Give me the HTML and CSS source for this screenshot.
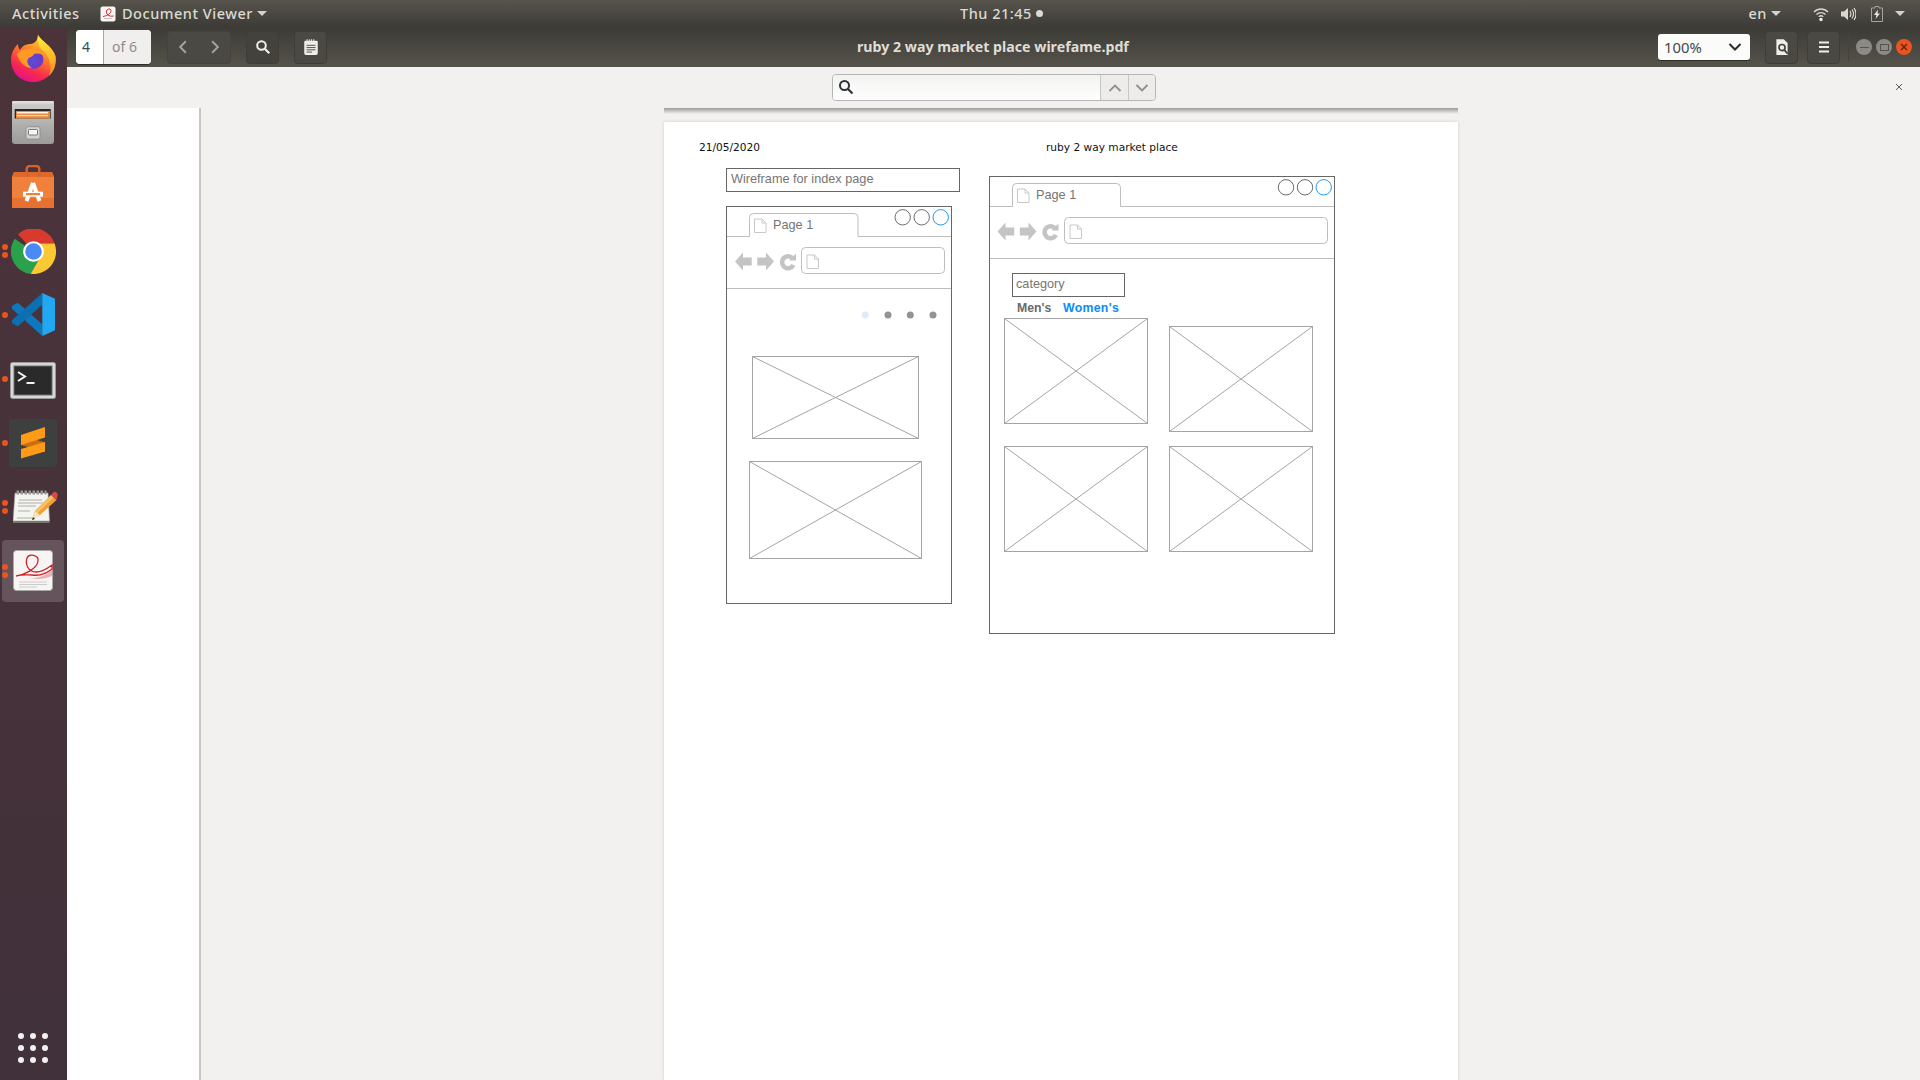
FILE: index.html
```html
<!DOCTYPE html>
<html lang="en">
<head>
<meta charset="utf-8">
<title>Document Viewer</title>
<link rel="stylesheet" href="styles.css">
</head>
<body>
<header class="topbar">
  <div class="tb-left">
    <span class="tb-text tb-activities">Activities</span>
    <span class="tb-app">
      <svg class="tb-appicon" viewBox="0 0 16 16"><rect x="0.500" y="0.500" width="15" height="15" rx="2" fill="#f6f5f3"/><path d="M3 10.500C6 10 11 8 11 4.500C11 2.500 7 2.500 6.500 5C6 8 8.500 11 13.500 10" fill="none" stroke="#d0242a" stroke-width="1"/><path d="M4 12.500h8" stroke="#b5b5b5" stroke-width="0.800"/></svg>
      <span class="tb-text">Document Viewer</span>
      <i class="caret"></i>
    </span>
  </div>
  <div class="tb-clock"><span class="tb-text">Thu 21:45</span><i class="clock-dot"></i></div>
  <div class="tb-right">
    <span class="tb-text tb-en">en</span><i class="caret"></i>
    <svg class="tray tray-wifi" viewBox="0 0 16 16"><path d="M1 6C5 2 11 2 15 6M3.500 8.500C6 6 10 6 12.500 8.500M5.800 10.800C7 9.700 9 9.700 10.200 10.800" fill="none" stroke="#d8d6d0" stroke-width="1.400"/><circle cx="8" cy="13.500" r="1.700" fill="#f0efea"/></svg>
    <svg class="tray tray-vol" viewBox="0 0 16 16"><path d="M1 5.500h3L8 2v12L4 10.500H1z" fill="#d8d6d0"/><path d="M10 5c1 1.800 1 4.200 0 6M12 3.500c1.800 2.600 1.800 6.400 0 9M14 2c2.400 3.600 2.400 8.400 0 12" fill="none" stroke="#d8d6d0" stroke-width="1.200"/></svg>
    <svg class="tray tray-bat" viewBox="0 0 12 16"><path d="M4 0.500h4v1.500h3.500v13.500h-11V2H4z" fill="none" stroke="#a5a39d" stroke-width="1"/><path d="M7 3.500L3 9h2.500L4.500 13 9 7.500H6.500z" fill="#e8e6e0"/></svg>
    <i class="caret"></i>
  </div>
</header>
<div class="desktop">
  <nav class="dock">
    <div class="dock-item">
      <svg class="ic ic-firefox" viewBox="0 0 45 47">
        <defs>
          <linearGradient id="ff1" x1="0.8" y1="0.1" x2="0.35" y2="1"><stop offset="0" stop-color="#ffd52b"/><stop offset="0.4" stop-color="#ff7a2a"/><stop offset="0.75" stop-color="#f8284f"/><stop offset="1" stop-color="#e4128c"/></linearGradient>
          <linearGradient id="ff3" x1="0.3" y1="0" x2="0.6" y2="1"><stop offset="0" stop-color="#ffe93a"/><stop offset="0.7" stop-color="#ffb22a"/><stop offset="1" stop-color="#ff8a2a"/></linearGradient>
          <radialGradient id="ff2" cx="0.5" cy="0.6" r="0.6"><stop offset="0" stop-color="#5f4bd6"/><stop offset="0.75" stop-color="#6a3cc4"/><stop offset="1" stop-color="#a22aa8"/></radialGradient>
        </defs>
        <path d="M27 0C30 6 40 10 44 20C47 34 36 47 22.500 47C9 47 0 37 0 25C0 18 3 13 7 9C7 12 8 14 9 15C11 11 15 9 20 9C25 8 27 4 27 0z" fill="url(#ff1)"/>
        <path d="M27 0C31 7 41 11 44.500 21C46 32 41 38 38 41C42 30 38 20 30 14C27 9 26 4 27 0z" fill="url(#ff3)"/>
        <circle cx="22.500" cy="24" r="10" fill="url(#ff2)"/>
        <path d="M6 19C10 14 17 13 24 14C30 15 34 20 34 22C30 18 26 18 23 19C22 22 18 22 17 24C15 28 18 31 21 33C14 33 8 27 6 19z" fill="#ff9a24"/>
      </svg>
    </div>
    <div class="dock-item">
      <svg class="ic ic-files" viewBox="0 0 42 43">
        <defs><linearGradient id="fc" x1="0" y1="0" x2="0" y2="1"><stop offset="0" stop-color="#cfcfcd"/><stop offset="0.55" stop-color="#b0b0ae"/><stop offset="1" stop-color="#9b9b99"/></linearGradient></defs>
        <rect width="42" height="43" rx="3" fill="url(#fc)"/>
        <rect width="42" height="2.500" rx="1.200" fill="#dededc"/>
        <rect x="2.700" y="8" width="36" height="9.500" fill="#2a2623"/>
        <rect x="4" y="10" width="34" height="7.500" fill="#e88a3a"/>
        <rect x="5" y="11" width="31" height="1.500" fill="#fbf1e4"/>
        <rect x="5" y="14" width="31" height="1.200" fill="#f8d9b8"/>
        <rect x="14" y="25.700" width="14" height="12.300" rx="2" fill="#d2d2d0" stroke="#8a8a88" stroke-width="0.800"/>
        <rect x="16.500" y="28.500" width="9" height="5.500" rx="1" fill="#f6f6f4" stroke="#5d5d5b" stroke-width="0.800"/>
      </svg>
    </div>
    <div class="dock-item">
      <svg class="ic ic-bag" viewBox="0 0 42 43">
        <path d="M2 7h38l2 5v31H0V12z" fill="#f0813c"/>
        <path d="M0 33h42v10H0z" fill="#e87132"/>
        <path d="M0 12l2-5h38l2 5z" fill="#dd6a2a"/>
        <path d="M14.700 11V4a3 3 0 0 1 3-3h6.600a3 3 0 0 1 3 3v7" fill="none" stroke="#d6622a" stroke-width="2.400"/>
        <path d="M21 18L14.500 36M21 18L27.500 36" stroke="#fff" stroke-width="4"/>
        <rect x="11" y="26.700" width="20" height="5" fill="#fff"/>
        <rect x="14" y="28" width="14" height="2.200" fill="#f0813c"/>
      </svg>
    </div>
    <div class="dock-item">
      <svg class="ic ic-chrome" viewBox="0 0 48 48">
        <path d="M24 24L7.500 5.500A24 24 0 0 1 46.500 15.500H24z" fill="#d93a2e"/>
        <path d="M24 24L4 10.500A24 24 0 0 0 21 47.800L33 27z" fill="#2aa24c"/>
        <path d="M24 15.500H46.500A24 24 0 0 1 21 47.800L33 27z" fill="#fcc934"/>
        <circle cx="24" cy="24" r="11" fill="#fff"/>
        <circle cx="24" cy="24" r="8.800" fill="#4a8af4"/>
      </svg>
    </div>
    <div class="dock-item">
      <svg class="ic ic-code" viewBox="0 0 44 44">
        <path d="M6 10L31 32v12L0 16v-3z" fill="#0f77bd"/>
        <path d="M6 34L31 12V0L0 28v3z" fill="#0b6fb2"/>
        <path d="M31 0l13 6v32l-13 6z" fill="#22a7f2"/>
      </svg>
    </div>
    <div class="dock-item">
      <svg class="ic ic-term" viewBox="0 0 46 37">
        <rect x="0.500" y="0.500" width="45" height="36" rx="2" fill="#d8d8d6" stroke="#9a9a98"/>
        <rect x="4" y="4" width="38" height="29" fill="#2a2a2a" stroke="#6d6d6b"/>
        <path d="M8 10l7 4.500-7 4.500" fill="none" stroke="#f2f2f2" stroke-width="2"/>
        <rect x="16.500" y="20" width="8" height="2" fill="#f2f2f2"/>
      </svg>
    </div>
    <div class="dock-item">
      <svg class="ic ic-subl" viewBox="0 0 48 48">
        <rect width="48" height="48" rx="3" fill="#3e3f3f"/>
        <path d="M12 16L36 23.500V33L12 26z" fill="#c96f0e"/>
        <path d="M36 8V18.500L12 26V16z" fill="#ff9b17"/>
        <path d="M36 23V32.500L12 39.500V30z" fill="#ff9b17"/>
      </svg>
    </div>
    <div class="dock-item">
      <svg class="ic ic-gedit" viewBox="0 0 45 34">
        <path d="M2 3h33l1.500 28H0z" fill="#f4f4f0" stroke="#a2a29e" stroke-width="0.600"/>
        <path d="M0 31h36.500v2H0z" fill="#77776f"/>
        <path d="M3.500 2.500h30" stroke="#98988f" stroke-width="4" stroke-dasharray="2.500 1.500"/>
        <path d="M6 10h23M5 13h25M5 16h18M5 21h12M4 28h15" stroke="#b0b0aa" stroke-width="1"/>
        <path d="M19 29L22 21L38 5L43.500 10L27 25z" fill="#f2a034"/>
        <path d="M22 21L38 5L40.500 7.500L24.500 23z" fill="#f8c068"/>
        <path d="M19 29L22 21L27 25z" fill="#f7e2c0"/>
        <path d="M38 5L40.500 2.300C42.500 0.800 45.500 3.500 44.500 6L43.500 10z" fill="#d9474a"/>
        <path d="M19 30l1-3 2 2z" fill="#222"/>
      </svg>
    </div>
    <div class="dock-item is-active">
      <span class="tile"></span>
      <svg class="ic ic-evince" viewBox="0 0 40 41">
        <rect x="0.500" y="0.500" width="39" height="40" rx="3" fill="#f6f5f3" stroke="#aaa8a6"/>
        <path d="M3 26c8-1 21-7 22-15 1-6-9-8-11-3-2 6 1 14 9 14 6 0 12-4 16-7v4c-6 5-13 7-20 6-5 0-9-1-16 1z" fill="none" stroke="#d01f28" stroke-width="1.300"/>
        <path d="M16 28c10 1 17-3 23-8v6c-7 3-15 4-23 2z" fill="#ec8f90" opacity="0.700"/>
        <path d="M6 32h28M6 34.500h28M6 37h18" stroke="#c0c0c0" stroke-width="0.800"/>
      </svg>
    </div>
    <div class="dock-apps">
      <i></i><i></i><i></i><i></i><i></i><i></i><i></i><i></i><i></i>
    </div>
  </nav>
  <main class="window">
    <div class="headerbar">
      <div class="hb-group">
        <div class="page-entry"><span class="pe-num">4</span><span class="pe-of">of 6</span></div>
        <div class="hb-btn hb-nav">
          <svg class="hb-ic" viewBox="0 0 14 14"><path d="M9.500 2L4.500 7l5 5" fill="none" stroke="#a5a39d" stroke-width="1.700"/></svg>
          <svg class="hb-ic" viewBox="0 0 14 14"><path d="M4.500 2l5 5-5 5" fill="none" stroke="#a5a39d" stroke-width="1.700"/></svg>
        </div>
        <div class="hb-btn hb-square hb-dark">
          <svg class="hb-ic" viewBox="0 0 16 16"><circle cx="6.500" cy="6.500" r="4.300" fill="none" stroke="#f0efea" stroke-width="2"/><path d="M9.800 9.800l4.500 4.500" stroke="#f0efea" stroke-width="2.200"/></svg>
        </div>
        <div class="hb-btn hb-square">
          <svg class="hb-ic hb-ic-lg" viewBox="0 0 16 16"><path d="M3 2.500h10a1 1 0 0 1 1 1v10a1.500 1.500 0 0 1-1.500 1.500h-9A1.500 1.500 0 0 1 2 13.500v-10a1 1 0 0 1 1-1z" fill="#efeee9"/><path d="M4.500 1v3M6.500 1v3M8.500 1v3M10.500 1v3" stroke="#efeee9" stroke-width="0.900"/><path d="M4 6.500h8M4 8.500h8M4 10.500h8M4 12.500h5" stroke="#45433e" stroke-width="0.800"/></svg>
        </div>
      </div>
      <div class="hb-title">ruby 2 way market place wirefame.pdf</div>
      <div class="hb-group hb-end">
        <div class="zoom-box"><span>100%</span><svg class="zoom-chev" viewBox="0 0 14 8"><path d="M1.500 1L7 6.500 12.500 1" fill="none" stroke="#2e2d2a" stroke-width="2"/></svg></div>
        <div class="hb-btn hb-square hb-doc">
          <svg class="hb-ic hb-ic-lg" viewBox="0 0 16 16"><path d="M3 1h6.500L13 4.500V15H3z" fill="#efeee9"/><circle cx="8" cy="8.500" r="2.700" fill="none" stroke="#45433e" stroke-width="1.500"/><path d="M10 10.500l3 3.500" stroke="#45433e" stroke-width="1.700"/></svg>
        </div>
        <div class="hb-btn hb-square">
          <svg class="hb-ic" viewBox="0 0 16 16"><path d="M3 3.500h10M3 8h10M3 12.500h10" stroke="#efeee9" stroke-width="2"/></svg>
        </div>
        <i class="hb-sep"></i>
        <div class="wm">
          <span class="wm-btn"><i class="wm-min"></i></span>
          <span class="wm-btn"><i class="wm-max"></i></span>
          <span class="wm-btn wm-close"><svg viewBox="0 0 10 10" class="wm-x"><path d="M2 2l6 6M8 2l-6 6" stroke="#5a2110" stroke-width="1.300"/></svg></span>
        </div>
      </div>
    </div>
    <div class="findbar">
      <div class="find-box">
        <div class="find-input">
          <svg class="find-ic" viewBox="0 0 16 16"><circle cx="6.500" cy="6.500" r="4.500" fill="none" stroke="#2e3436" stroke-width="2"/><path d="M10 10l4.500 4.500" stroke="#2e3436" stroke-width="2.200"/></svg>
        </div>
        <div class="find-btn"><svg viewBox="0 0 14 8" class="find-chev"><path d="M1.500 7L7 1.500 12.500 7" fill="none" stroke="#8f8f8b" stroke-width="1.800"/></svg></div>
        <div class="find-btn"><svg viewBox="0 0 14 8" class="find-chev"><path d="M1.500 1L7 6.500 12.500 1" fill="none" stroke="#8f8f8b" stroke-width="1.800"/></svg></div>
      </div>
      <svg class="find-close" viewBox="0 0 8 8"><path d="M1 1l6 6M7 1L1 7" stroke="#5a5a58" stroke-width="1"/></svg>
    </div>
    <div class="viewer">
      <aside class="sidepane"></aside>
      <div class="scroller">
        <i class="find-shadow"></i>
        <section class="page">
          <svg class="sheet" viewBox="664 122 794 958">
            <defs>
              <g id="doc"><path d="M0.500 0.500H8L12 4.500V14H0.500z" fill="#fff" stroke="#c8c8c8"/><path d="M8 0.500V4.500H12" fill="none" stroke="#c8c8c8"/></g>
              <g id="nav">
                <path d="M0 9l8-9v5h8.700v8H8v5z" fill="#c4c4c4"/>
                <path d="M39 9l-8-9v5h-8.700v8h8.700v5z" fill="#c4c4c4"/>
                <path d="M58.500 7A6 6 0 1 0 58.500 12.500" fill="none" stroke="#c4c4c4" stroke-width="4.500"/>
                <path d="M54 8H61V1z" fill="#c4c4c4"/>
              </g>
            </defs>
            <text class="t-date" x="699" y="151">21/05/2020</text>
            <text class="t-date" x="1046" y="151">ruby 2 way market place</text>

            <rect class="box" x="726.500" y="168.500" width="233" height="23"/>
            <text class="t-label" x="731" y="182.500">Wireframe for index page</text>

            <rect class="box" x="726.500" y="206.500" width="225" height="397"/>
            <path class="thin" d="M727 236.500H749.500V217.500a4 4 0 0 1 4-4H854a4 4 0 0 1 4 4V236.500H951"/>
            <use href="#doc" x="754" y="218.500"/>
            <text class="t-label" x="773" y="229">Page 1</text>
            <circle class="c-grey" cx="902.700" cy="217.300" r="7.700"/>
            <circle class="c-grey" cx="921.700" cy="217.300" r="7.700"/>
            <circle class="c-blue" cx="940.700" cy="217.300" r="7.700"/>
            <use href="#nav" x="735" y="252.500"/>
            <rect class="thin" x="801.500" y="247.500" width="143" height="26" rx="4"/>
            <use href="#doc" x="806.500" y="254.500"/>
            <path class="thin" d="M727 288.500H951"/>
            <circle cx="865.300" cy="315" r="3.500" fill="#dcecfb"/>
            <circle cx="888" cy="315" r="3.500" fill="#939393"/>
            <circle cx="910.300" cy="315" r="3.500" fill="#939393"/>
            <circle cx="933" cy="315" r="3.500" fill="#939393"/>

            <g class="ph"><rect x="752.500" y="356.500" width="166" height="82"/><path d="M752.500 356.500L918.500 438.500M918.500 356.500L752.500 438.500"/></g>
            <g class="ph"><rect x="749.500" y="461.500" width="172" height="97"/><path d="M749.500 461.500L921.500 558.500M921.500 461.500L749.500 558.500"/></g>

            <rect class="box" x="989.500" y="176.500" width="345" height="457"/>
            <path class="thin" d="M990 206.500H1012.500V187.500a4 4 0 0 1 4-4H1116.500a4 4 0 0 1 4 4V206.500H1334"/>
            <use href="#doc" x="1017" y="188.500"/>
            <text class="t-label" x="1036" y="199">Page 1</text>
            <circle class="c-grey" cx="1286" cy="187.300" r="7.700"/>
            <circle class="c-grey" cx="1305" cy="187.300" r="7.700"/>
            <circle class="c-blue" cx="1323.700" cy="187.300" r="7.700"/>
            <use href="#nav" x="997.500" y="222.500"/>
            <rect class="thin" x="1064.500" y="217.500" width="263" height="26" rx="4"/>
            <use href="#doc" x="1069.500" y="224.500"/>
            <path class="thin" d="M990 258.500H1334"/>

            <rect class="box" x="1012.500" y="273.500" width="112" height="23"/>
            <text class="t-label" x="1016" y="288">category</text>
            <text class="t-tab" x="1017" y="312">Men's</text>
            <text class="t-tab is-on" x="1063" y="312">Women's</text>

            <g class="ph"><rect x="1004.500" y="318.500" width="143" height="105"/><path d="M1004.500 318.500L1147.500 423.500M1147.500 318.500L1004.500 423.500"/></g>
            <g class="ph"><rect x="1169.500" y="326.500" width="143" height="105"/><path d="M1169.500 326.500L1312.500 431.500M1312.500 326.500L1169.500 431.500"/></g>
            <g class="ph"><rect x="1004.500" y="446.500" width="143" height="105"/><path d="M1004.500 446.500L1147.500 551.500M1147.500 446.500L1004.500 551.500"/></g>
            <g class="ph"><rect x="1169.500" y="446.500" width="143" height="105"/><path d="M1169.500 446.500L1312.500 551.500M1312.500 446.500L1169.500 551.500"/></g>
          </svg>
        </section>
      </div>
    </div>
  </main>
</div>
</body>
</html>
```

FILE: styles.css
```css
* { box-sizing: border-box; }
html, body { margin: 0; height: 100%; overflow: hidden; }
body { display: flex; flex-direction: column; width: 1920px; height: 1080px; font-family: "Open Sans", "Noto Sans", sans-serif; background: #f2f1f0; }

/* top bar */
.topbar { position: relative; flex: 0 0 27px; display: flex; align-items: center; justify-content: space-between; background: linear-gradient(#57544c, #3c3b37); color: #e2e0da; }
.tb-text { font: 500 14.500px/27px "Noto Sans", sans-serif; letter-spacing: 0.520px; color: #dcdad4; }
.tb-left { display: flex; align-items: center; padding-left: 12px; }
.tb-activities { width: 88px; }
.tb-app { display: flex; align-items: center; }
.tb-appicon { width: 16px; height: 16px; margin-right: 6px; }
.caret { display: block; width: 0; height: 0; border-left: 5px solid transparent; border-right: 5px solid transparent; border-top: 5px solid #d4d2cc; }
.tb-app .caret { margin-left: 4px; }
.tb-clock { position: absolute; left: 960px; top: 0; display: flex; align-items: center; height: 27px; }
.clock-dot { width: 7px; height: 7px; border-radius: 50%; background: #dcdad4; margin-left: 4px; }
.tb-right { display: flex; align-items: center; padding-right: 15px; }
.tb-en { margin-right: 4px; }
.tray { display: block; height: 16px; }
.tray-wifi { width: 16px; margin-left: 32px; }
.tray-vol { width: 16px; margin-left: 11px; }
.tray-bat { width: 12px; margin-left: 15px; }
.tb-right > .caret:last-child { margin-left: 12px; }

/* dock */
.desktop { flex: 1; display: flex; min-height: 0; }
.dock { flex: 0 0 67px; display: flex; flex-direction: column; background: linear-gradient(#4c333a, #41313a); }
.dock-item { position: relative; width: 66px; height: 64px; display: flex; align-items: center; justify-content: center; }
.ic { display: block; position: relative; }
.ic-firefox { width: 45px; height: 47px; margin-top: -1px; }
.ic-files { width: 42px; height: 43px; margin-top: -1px; }
.ic-bag { width: 42px; height: 43px; margin-top: -1px; }
.ic-chrome { width: 45px; height: 45px; }
.ic-code { width: 43px; height: 43px; margin-top: -1px; }
.ic-term { width: 46px; height: 37px; margin-top: 3px; }
.ic-subl { width: 48px; height: 48px; }
.ic-gedit { width: 45px; height: 34px; margin-left: 4px; }
.ic-evince { width: 40px; height: 41px; margin-top: -2px; }
.tile { position: absolute; left: 2px; right: 2px; top: 1px; bottom: 1px; border-radius: 4px; background: rgba(255, 255, 255, 0.17); }
.dock-item:nth-child(n+4):nth-child(-n+9)::before { content: ""; position: absolute; left: 2px; top: 29px; width: 6px; height: 6px; border-radius: 50%; background: #e9541f; z-index: 1; }
.dock-item:nth-child(4)::before, .dock-item:nth-child(8)::before, .dock-item:nth-child(9)::before { top: 25px !important; box-shadow: 0 8px 0 #e9541f; }
.dock-apps { width: 66px; margin-top: auto; height: 64px; display: grid; grid-template-columns: repeat(3, 6px); grid-auto-rows: 6px; gap: 6px; align-content: center; justify-content: center; }
.dock-apps i { border-radius: 50%; background: #f2f1ef; }

/* header bar */
.window { flex: 1; display: flex; flex-direction: column; min-width: 0; }
.headerbar { position: relative; flex: 0 0 40px; display: flex; align-items: center; justify-content: space-between; padding: 0 0 0 9px; background: linear-gradient(#3c3b37, #56534b); }
.hb-group { display: flex; align-items: center; }
.page-entry { display: flex; width: 75px; height: 34px; border-radius: 4px; overflow: hidden; background: #f6f5f4; font: 14px/34px "Noto Sans", sans-serif; box-shadow: 0 1px 0 #2d2c29; }
.pe-num { width: 28px; padding-left: 6px; background: #fff; color: #3d4a55; border-right: 1px solid #a8a6a2; }
.pe-of { flex: 1; padding-left: 8px; color: #8e8c88; background: #f0efee; }
.hb-btn { height: 33px; display: flex; align-items: center; border: 1px solid #3f3d38; border-radius: 4px; background: #4b4943; }
.hb-nav { width: 64px; margin-left: 16px; justify-content: space-between; padding: 0 7px; border-color: #45433e; }
.hb-square { width: 33px; justify-content: center; }
.hb-dark { margin-left: 15px; background: #44423d; }
.hb-dark + .hb-square { margin-left: 15px; }
.hb-ic { width: 16px; height: 16px; display: block; }
.hb-ic-lg { width: 18px; height: 18px; }
.hb-title { position: absolute; left: 790px; top: 0; font: 700 14.200px/40px "Noto Sans", sans-serif; color: #dfddd7; white-space: nowrap; }
.hb-end { padding-right: 8px; }
.zoom-box { width: 92px; height: 26px; display: flex; align-items: center; justify-content: space-between; padding: 0 8px 0 6px; border-radius: 3px; background: #fbfbfa; color: #46464a; font: 14.800px/26px "Noto Sans", sans-serif; box-shadow: 0 1px 0 #2d2c29; }
.zoom-chev { width: 14px; height: 8px; }
.hb-doc { margin-left: 15px; }
.hb-doc + .hb-square { margin-left: 9px; }
.hb-sep { width: 1px; height: 28px; background: #45433e; margin: 0 7px 0 8px; }
.wm { display: flex; gap: 4px; }
.wm-btn { width: 16px; height: 16px; border-radius: 50%; background: #8b8a84; display: flex; align-items: center; justify-content: center; }
.wm-min { width: 9px; height: 1px; background: #55534d; }
.wm-max { width: 9px; height: 7px; border: 1px solid #55534d; }
.wm-close { background: #e95420; }
.wm-x { width: 10px; height: 10px; }

/* find bar */
.findbar { position: relative; flex: 0 0 41px; display: flex; align-items: flex-start; justify-content: flex-start; padding: 7px 0 0 765px; background: #f2f1f0; }
.find-box { display: flex; width: 324px; height: 27px; border: 1px solid #b6b6b3; border-radius: 4px; overflow: hidden; }
.find-input { flex: 1; background: linear-gradient(#f2f2f1, #fff); padding: 4px 0 0 5px; }
.find-ic { display: block; width: 16px; height: 16px; }
.find-btn { width: 27.500px; display: flex; align-items: center; justify-content: center; background: #edecea; border-left: 1px solid #c8c7c4; }
.find-chev { width: 14px; height: 8px; margin-left: 1px; }
.find-close { position: absolute; left: 1828px; top: 16px; width: 8px; height: 8px; }

/* document view */
.viewer { flex: 1; display: flex; min-height: 0; }
.sidepane { flex: 0 0 134px; background: #fff; border-right: 2px solid #c8c6c3; }
.scroller { position: relative; flex: 1; padding: 14px 0 0 463px; overflow: hidden; }
.find-shadow { position: absolute; left: 463px; top: 0; width: 794px; height: 6px; background: linear-gradient(#9c9b97, #f2f1f0); filter: blur(0.500px); }
.page { width: 794px; height: 958px; background: #fff; box-shadow: 0 0 3px rgba(0, 0, 0, 0.15); }
.sheet { display: block; width: 794px; height: 958px; }
.sheet text { font-family: "Liberation Sans", Arial, sans-serif; }
.sheet .t-date { font-family: "DejaVu Sans", sans-serif; font-size: 10.600px; fill: #111; }
.t-label { font-size: 12.700px; fill: #757575; }
.t-tab { font-size: 12.300px; font-weight: 700; fill: #6a6a6a; }
.t-tab.is-on { fill: #0a8cfa; letter-spacing: 0.300px; }
.box { fill: none; stroke: #666; stroke-width: 1; }
.thin { fill: none; stroke: #bdbdbd; stroke-width: 1; }
.c-grey { fill: #fff; stroke: #6a6a6a; stroke-width: 1; }
.c-blue { fill: #fff; stroke: #1f97f5; stroke-width: 1; }
.ph rect, .ph path { fill: none; stroke: #a4a4a4; stroke-width: 1; }
```
